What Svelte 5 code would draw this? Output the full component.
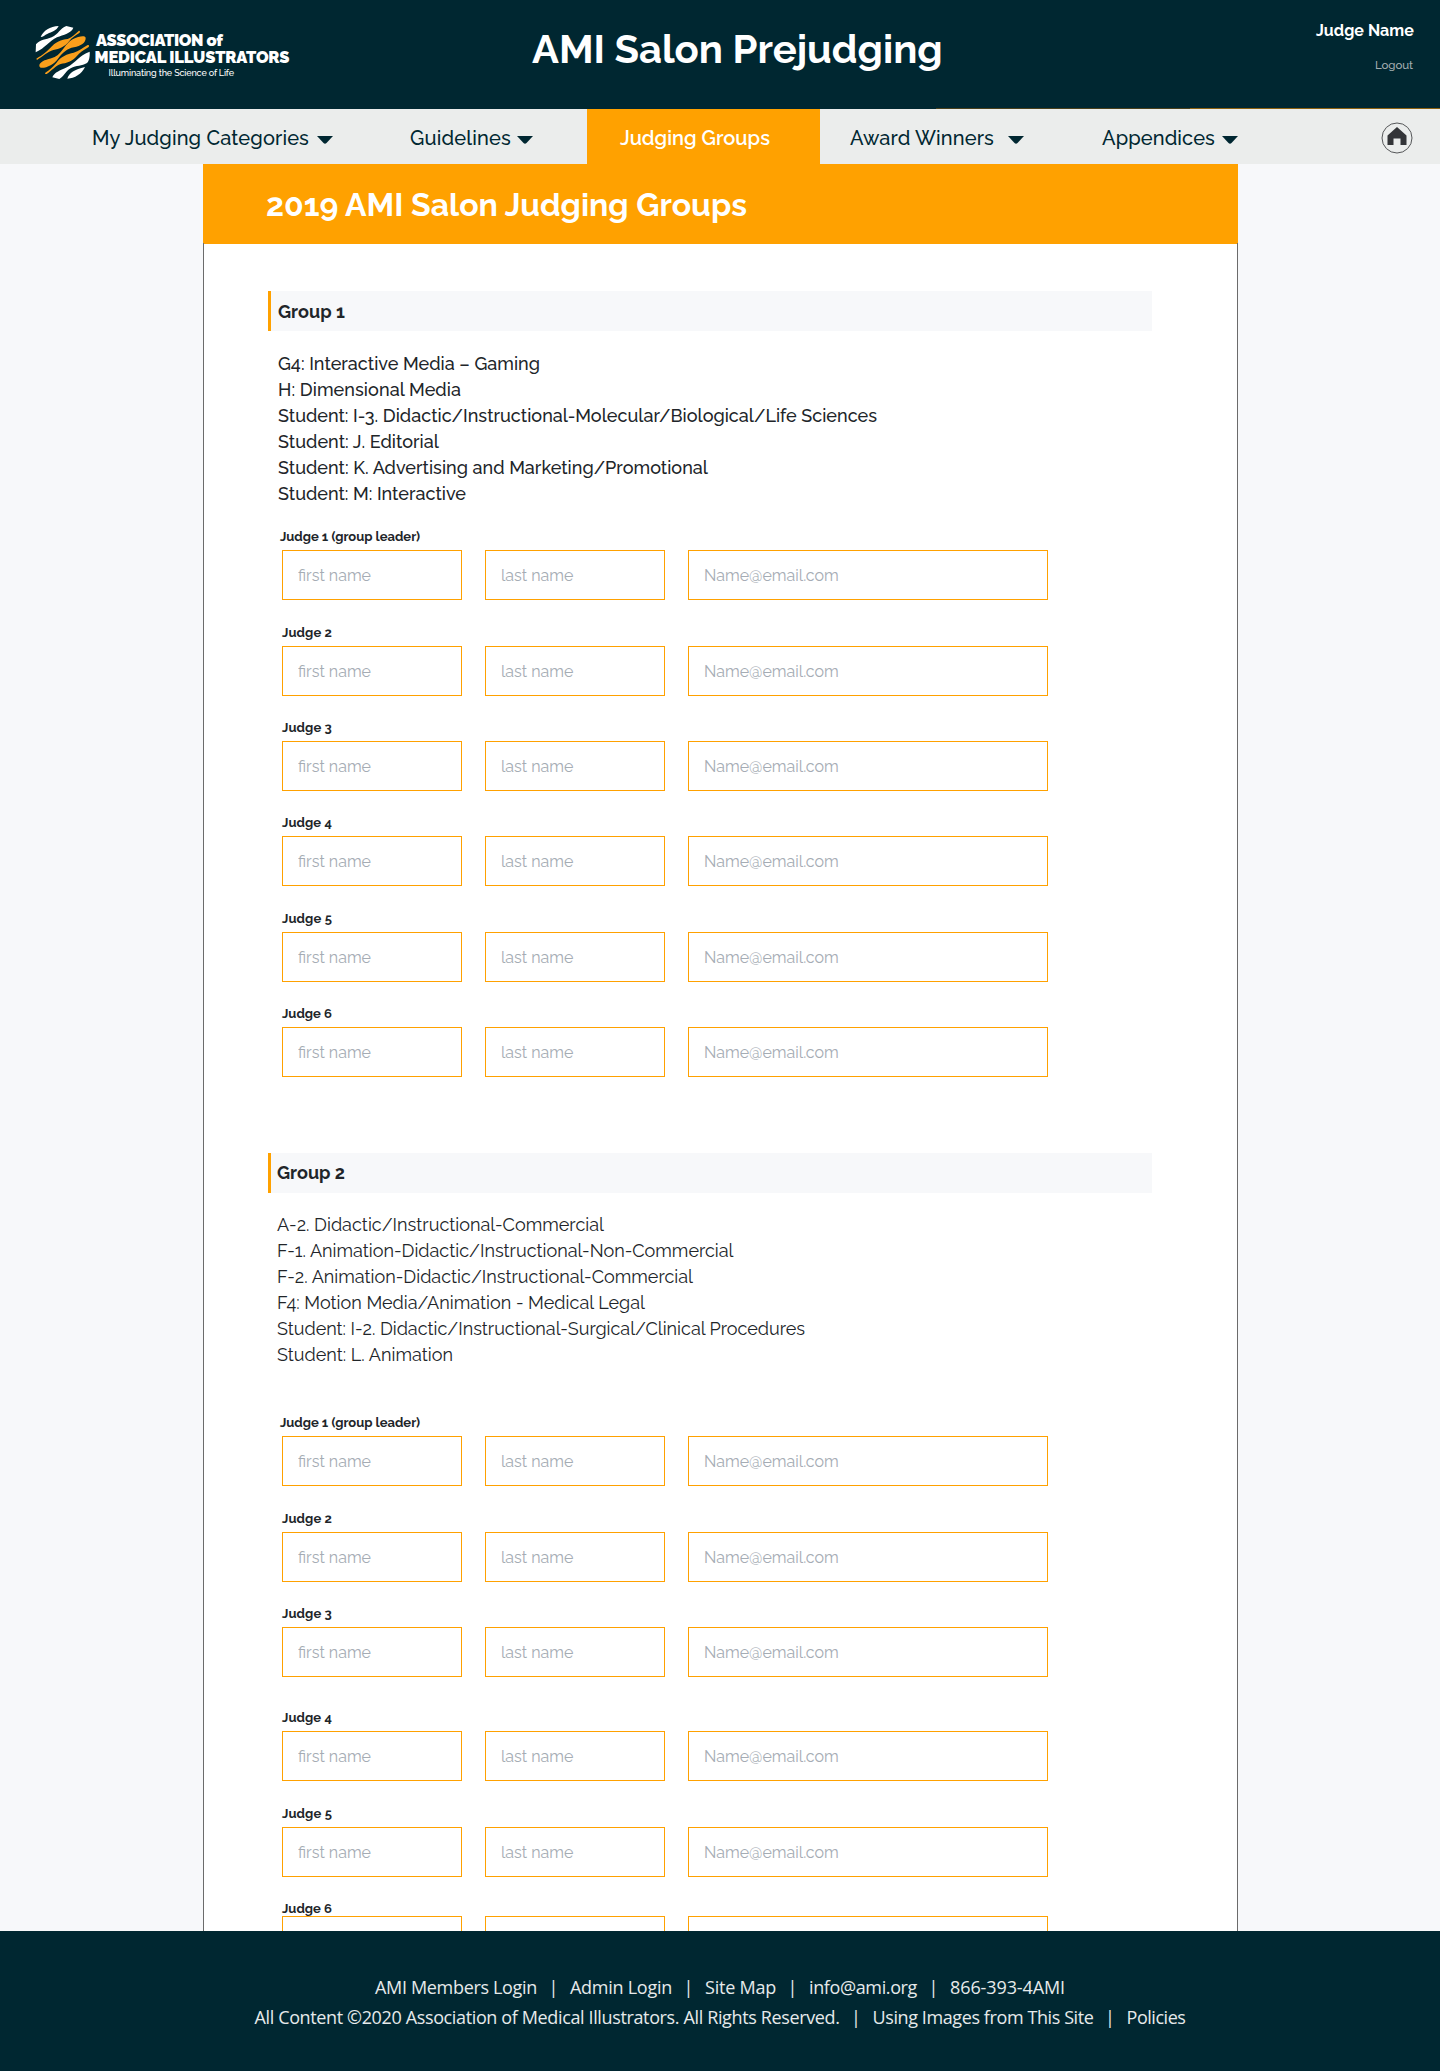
<script>
  // Spreads a line of text to its set width through letter-spacing.
  function fit(node, width) {
    const natural = node.getBoundingClientRect().width;
    const count = node.textContent.length;
    node.style.letterSpacing = `${(width - natural) / count}px`;
  }

  const groups = [
    {
      name: 'Group 1',
      width: 67,
      categories: [
        ['G4: Interactive Media – Gaming', 262],
        ['H: Dimensional Media', 183],
        ['Student: I-3. Didactic/Instructional-Molecular/Biological/Life Sciences', 599],
        ['Student: J. Editorial', 161],
        ['Student: K. Advertising and Marketing/Promotional', 430],
        ['Student: M: Interactive', 188]
      ]
    },
    {
      name: 'Group 2',
      width: 68,
      categories: [
        ['A-2. Didactic/Instructional-Commercial', 327],
        ['F-1. Animation-Didactic/Instructional-Non-Commercial', 456.5],
        ['F-2. Animation-Didactic/Instructional-Commercial', 416],
        ['F4: Motion Media/Animation - Medical Legal', 368],
        ['Student: I-2. Didactic/Instructional-Surgical/Clinical Procedures', 528],
        ['Student: L. Animation', 176]
      ]
    }
  ];
  const judges = [1, 2, 3, 4, 5, 6];
</script>

<div class="page">
  <header>
    <div class="logo">
      <svg width="260" height="60" viewBox="0 0 260 60" role="img" aria-label="Association of Medical Illustrators">
        <g transform="translate(-35 -25) scale(.33333)">
          <g fill="#fff">
            <path d="M122 111C130 92 150 79 176 78C170 92 154 96 143 101C134 105 129 111 122 111Z" />
            <path d="M107 157L108 133C120 119 138 119 155 112C176 103 180 84 199 78L220 83C214 100 190 104 171 112C148 122 136 145 107 157Z" />
            <path d="M269 155C270 170 267 184 261 189C245 199 230 195 212 205C195 215 190 232 178 237L157 232C163 216 182 211 202 201C225 190 239 165 269 155Z" />
            <path d="M202 236C207 218 224 209 255 201C245 222 224 235 202 236Z" />
          </g>
          <g fill="#fa9f1b">
            <path d="M109 176C127 166 137 158 150 145C165 126 185 118 203 117C216 112 226 102 236 93C239 91 242 96 238 99C224 107 215 114 208 123C195 140 178 147 160 150C143 155 128 169 111 180Z" />
            <path d="M119 192C130 178 148 178 164 171C189 159 195 130 218 118C235 110 253 105 257 113C258 128 242 138 222 142C201 146 188 158 174 176C162 193 139 205 122 203C118 201 117 197 119 192Z" />
            <path d="M136 218C148 211 158 202 169 189C182 169 202 162 221 158C236 153 250 143 263 135C268 134 269 139 265 142C249 151 239 158 230 169C217 185 199 190 182 192C167 197 155 212 140 222C136 223 134 220 136 218Z" />
          </g>
        </g>
        <text class="mark" x="61" y="21" textLength="127">ASSOCIATION of</text>
        <text class="mark" x="59.5" y="38" textLength="195">MEDICAL ILLUSTRATORS</text>
        <text class="tagline" x="73.5" y="51" textLength="125.5">Illuminating the Science of Life</text>
      </svg>
    </div>
    <h1><span use:fit={410.7}>AMI Salon Prejudging</span></h1>
    <div class="user">
      <strong><span use:fit={98}>Judge Name</span></strong>
      <a href="#logout"><span use:fit={38}>Logout</span></a>
    </div>
    <div class="rule"></div>
  </header>

  {#snippet arrow()}
    <svg class="arrow" width="16" height="8" viewBox="0 0 16 8"><path d="M0 0H16L9.5 7Q8 8.6 6.5 7Z" fill="#002731" /></svg>
  {/snippet}

  <nav>
    <a class="categories" href="#categories"><span use:fit={217}>My Judging Categories</span>{@render arrow()}</a>
    <a class="guidelines" href="#guidelines"><span use:fit={101}>Guidelines</span>{@render arrow()}</a>
    <a class="active" href="#groups"><span use:fit={150}>Judging Groups</span></a>
    <a class="winners" href="#winners"><span use:fit={144}>Award Winners</span>{@render arrow()}</a>
    <a class="appendices" href="#appendices"><span use:fit={113}>Appendices</span>{@render arrow()}</a>
    <a class="home" href="#home" aria-label="Home">
      <svg width="32" height="32" viewBox="0 0 32 32">
        <circle cx="16" cy="16" r="15" fill="none" stroke="#555759" />
        <path d="M6.5 13.5L16 5L25.5 13.5V23H19.5V16.5H12.5V23H6.5Z" fill="#333538" />
      </svg>
    </a>
  </nav>

  <main>
    <h2><span use:fit={481}>2019 AMI Salon Judging Groups</span></h2>
    {#each groups as group, g}
      <section class:second={g === 1}>
        <h3><span use:fit={group.width}>{group.name}</span></h3>
        <ul>
          {#each group.categories as [text, width]}
            <li><span use:fit={width}>{text}</span></li>
          {/each}
        </ul>
        <div class="judges">
          {#each judges as n}
            <div class="judge">
              <div class="label">
                {#if n === 1}
                  <span use:fit={140}>Judge 1 (group leader)</span>
                {:else}
                  <span use:fit={50}>Judge {n}</span>
                {/if}
              </div>
              <div class="fields">
                <input placeholder="first name" aria-label="First name" />
                <input placeholder="last name" aria-label="Last name" />
                <input class="email" placeholder="Name@email.com" aria-label="Email" />
              </div>
            </div>
          {/each}
        </div>
      </section>
    {/each}
  </main>

  <footer>
    <p>
      <span use:fit={162}>AMI Members Login</span><i>|</i><span use:fit={102}>Admin Login</span><i>|</i><span use:fit={71}>Site Map</span><i>|</i><span use:fit={108}>info@ami.org</span><i>|</i><span use:fit={115}>866-393-4AMI</span>
    </p>
    <p>
      <span use:fit={585}>All Content ©2020 Association of Medical Illustrators. All Rights Reserved.</span><i>|</i><span use:fit={221}>Using Images from This Site</span><i>|</i><span use:fit={59}>Policies</span>
    </p>
  </footer>
</div>

<style>
  :global(body) {
    background: #f7f8fa;
  }
  .page {
    width: 1440px;
    height: 2071px;
    display: flex;
    flex-direction: column;
    overflow: hidden;
    font-family: Raleway, Lato, sans-serif;
    color: #212529;
  }
  span {
    white-space: nowrap;
  }
  a {
    color: inherit;
    text-decoration: none;
  }
  h1, h2, h3, ul, p {
    margin: 0;
    padding: 0;
  }

  header {
    flex: none;
    height: 109px;
    background: #002731;
    color: #fff;
    display: grid;
    grid-template: 108px 1px / 532px 1fr auto;
  }
  .logo {
    padding: 25px 0 0 35px;
  }
  .mark {
    font-size: 16.5px;
    font-weight: 900;
    fill: #fff;
  }
  .tagline {
    font-size: 9px;
    font-weight: 500;
    fill: #fff;
  }
  h1 {
    font-size: 40px;
    line-height: 48px;
    padding-top: 25px;
  }
  .user {
    display: flex;
    flex-direction: column;
    align-items: flex-end;
    padding: 21px 26px 0 0;
  }
  .user strong {
    font-size: 16px;
    line-height: 20px;
  }
  .user a {
    font-size: 11.5px;
    font-weight: 500;
    line-height: 16px;
    margin: 16px 1px 0 0;
    color: #a3adb0;
  }
  .rule {
    grid-column: 1 / -1;
    background: linear-gradient(to right, transparent 936px, #4a401b 936px, #4a401b 1190px, #8b6110 1190px);
  }

  nav {
    flex: none;
    height: 55px;
    background: #ebedec;
    color: #002731;
    display: flex;
    font-size: 20px;
    font-weight: 500;
  }
  nav a {
    box-sizing: border-box;
    display: flex;
    align-items: center;
    flex: none;
    padding-top: 2px;
  }
  .arrow {
    margin: 5px 0 0 7px;
  }
  .categories {
    width: 410px;
    padding-left: 92px;
  }
  .categories .arrow {
    margin-left: 8px;
  }
  .guidelines {
    width: 177px;
  }
  .guidelines .arrow {
    margin-left: 6px;
  }
  .active {
    width: 233px;
    padding-left: 33px;
    background: #ffa100;
    color: #fff;
    font-weight: 600;
  }
  .winners {
    width: 282px;
    padding-left: 30px;
  }
  .winners .arrow {
    margin-left: 14px;
  }
  .appendices {
    flex: 1;
  }
  .home {
    padding-right: 27.5px;
  }

  main {
    box-sizing: border-box;
    flex: none;
    width: 1035px;
    height: 1767px;
    margin-left: 203px;
    background: linear-gradient(#ffa100 80px, #fff 80px);
    border-style: solid;
    border-width: 0 1px;
    border-image: linear-gradient(#ffa100 80px, #6b6b6b 80px) 1;
    overflow: hidden;
  }
  h2 {
    box-sizing: border-box;
    height: 80px;
    margin-bottom: 47px;
    padding: 1px 0 0 62px;
    color: #fff;
    font-size: 32px;
    line-height: 80px;
  }
  section {
    margin-left: 64px;
  }
  .second {
    margin-top: 76px;
  }
  h3 {
    box-sizing: border-box;
    width: 884px;
    height: 40px;
    padding-left: 7px;
    border-left: 3px solid #ffa100;
    background: #f7f8fa;
    font-size: 18px;
    line-height: 42px;
  }
  .second h3 {
    padding-left: 6px;
    line-height: 40px;
  }
  ul {
    list-style: none;
    height: 156px;
    padding: 20px 0 0 10px;
    font-size: 18px;
    font-weight: 500;
    line-height: 26px;
  }
  .second ul {
    padding: 19px 0 0 9px;
    font-weight: 400;
  }
  li {
    height: 26px;
  }
  .judges {
    padding: 21px 0 0 14px;
  }
  .second .judges {
    padding-top: 46px;
  }
  .judge {
    margin-bottom: 23px;
  }
  .judge:nth-child(1),
  .judge:nth-child(4) {
    margin-bottom: 24px;
  }
  .judge:last-child {
    margin-bottom: 0;
  }
  .second .judge:nth-child(3) {
    margin-bottom: 32px;
  }
  .label {
    height: 22px;
    font-size: 13px;
    font-weight: 700;
    line-height: 18px;
  }
  .judge:first-child .label {
    margin-left: -2px;
  }
  .second .judge:last-child .label {
    height: 16px;
  }
  .fields {
    display: flex;
    gap: 23px;
  }
  input {
    box-sizing: border-box;
    width: 180px;
    height: 50px;
    margin: 0;
    padding: 0 15px;
    border: 1px solid #ffa100;
    border-radius: 0;
    background: #fff;
    font: 400 16px Raleway, Lato, sans-serif;
    outline: none;
  }
  input::placeholder {
    color: #a5acb4;
    opacity: 1;
  }
  .email {
    width: 360px;
  }

  footer {
    box-sizing: border-box;
    flex: none;
    height: 140px;
    padding-top: 41px;
    background: #002731;
    color: #e6eaeb;
    font: 18px/30px "Segoe UI", "Open Sans", sans-serif;
  }
  footer p {
    display: flex;
    justify-content: center;
  }
  footer i {
    width: 33px;
    text-align: center;
    font-style: normal;
  }
</style>
